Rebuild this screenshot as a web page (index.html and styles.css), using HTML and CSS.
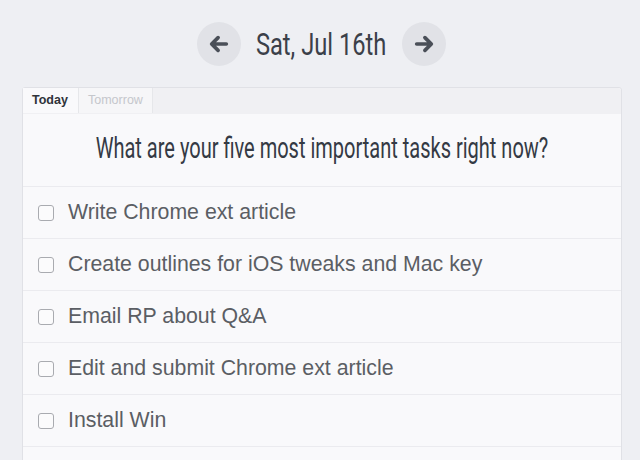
FILE: index.html
```html
<!DOCTYPE html>
<html>
<head>
<meta charset="utf-8">
<link rel="stylesheet" href="styles.css">
</head>
<body>
<div class="page">
  <header class="datebar">
    <button class="nav" aria-label="Previous day">
      <svg width="22" height="22" viewBox="0 0 24 24"><path d="M20 12H5M11 5l-7 7 7 7" fill="none" stroke="#4a4f58" stroke-width="4" stroke-linecap="round" stroke-linejoin="round"/></svg>
    </button>
    <h1 class="date"><span class="cond">Sat, Jul 16th</span></h1>
    <button class="nav" aria-label="Next day">
      <svg width="22" height="22" viewBox="0 0 24 24"><path d="M4 12h15M13 5l7 7-7 7" fill="none" stroke="#4a4f58" stroke-width="4" stroke-linecap="round" stroke-linejoin="round"/></svg>
    </button>
  </header>
  <section class="card">
    <nav class="tabs">
      <div class="tab active">Today</div>
      <div class="tab">Tomorrow</div>
    </nav>
    <h2 class="question"><span class="cond q">What are your five most important tasks right now?</span></h2>
    <ul class="tasks">
      <li class="task"><span class="box"></span><span class="label">Write Chrome ext article</span></li>
      <li class="task"><span class="box"></span><span class="label">Create outlines for iOS tweaks and Mac key</span></li>
      <li class="task"><span class="box"></span><span class="label">Email RP about Q&amp;A</span></li>
      <li class="task"><span class="box"></span><span class="label">Edit and submit Chrome ext article</span></li>
      <li class="task"><span class="box"></span><span class="label">Install Win</span></li>
      <li class="task"></li>
    </ul>
  </section>
</div>
</body>
</html>
```
FILE: styles.css
```css
html, body {
  margin: 0;
  padding: 0;
  background: #eeeff3;
  height: 100%;
  overflow: hidden;
}
.page {
  padding: 22px 18px 0 22px;
  font-family: "Liberation Sans", Arial, sans-serif;
  height: 438px;
  overflow: hidden;
}
.datebar {
  display: flex;
  align-items: center;
  justify-content: center;
  gap: 17px;
  height: 44px;
  margin-bottom: 21px;
  padding-right: 2px;
}
.nav {
  width: 44px;
  height: 44px;
  border-radius: 50%;
  border: none;
  background: #e1e2e7;
  display: flex;
  align-items: center;
  justify-content: center;
  padding: 0;
}
.cond {
  display: inline-block;
  font-family: Roboto, sans-serif;
  transform: scaleX(0.74);
  white-space: nowrap;
}
.date {
  margin: 0;
  font-size: 32px;
  font-weight: 400;
  color: #3b4049;
  width: 127px;
  text-align: center;
  line-height: 44px;
  display: flex;
  justify-content: center;
}
.card {
  background: #f9f9fb;
  border: 1px solid #e0e1e6;
  border-radius: 3px;
  height: 400px;
}
.tabs {
  display: flex;
  background: #f0f0f3;
  height: 25px;
  border-bottom: 1px solid #f0f0f3;
  border-radius: 3px 3px 0 0;
}
.tab {
  font-size: 12.5px;
  line-height: 25px;
  padding: 0 9px;
  color: #c5c7cc;
  background: #f6f6f8;
  border: 1px solid #e6e7ea;
  border-bottom: none;
  border-top: none;
}
.tab.active {
  color: #2f333a;
  font-weight: 700;
  background: #f9f9fb;
  border: none;
  padding: 0 9px;
  width: 37px;
}
.question {
  margin: 0;
  height: 72px;
  line-height: 68px;
  text-align: center;
  font-size: 29px;
  font-weight: 400;
  color: #343a44;
  border-bottom: 1px solid #ebebef;
  display: flex;
  justify-content: center;
}
.cond.q {
  transform: scaleX(0.69);
}
.tasks {
  list-style: none;
  margin: 0;
  padding: 0;
}
.task {
  display: flex;
  align-items: center;
  gap: 14px;
  height: 51px;
  padding-left: 15px;
  border-bottom: 1px solid #ebebef;
}
.box {
  width: 14px;
  height: 14px;
  border: 1.5px solid #a9abb0;
  border-radius: 3px;
  background: #fbfbfc;
  flex: none;
}
.label {
  font-size: 21.3px;
  color: #5b5e64;
}
```
